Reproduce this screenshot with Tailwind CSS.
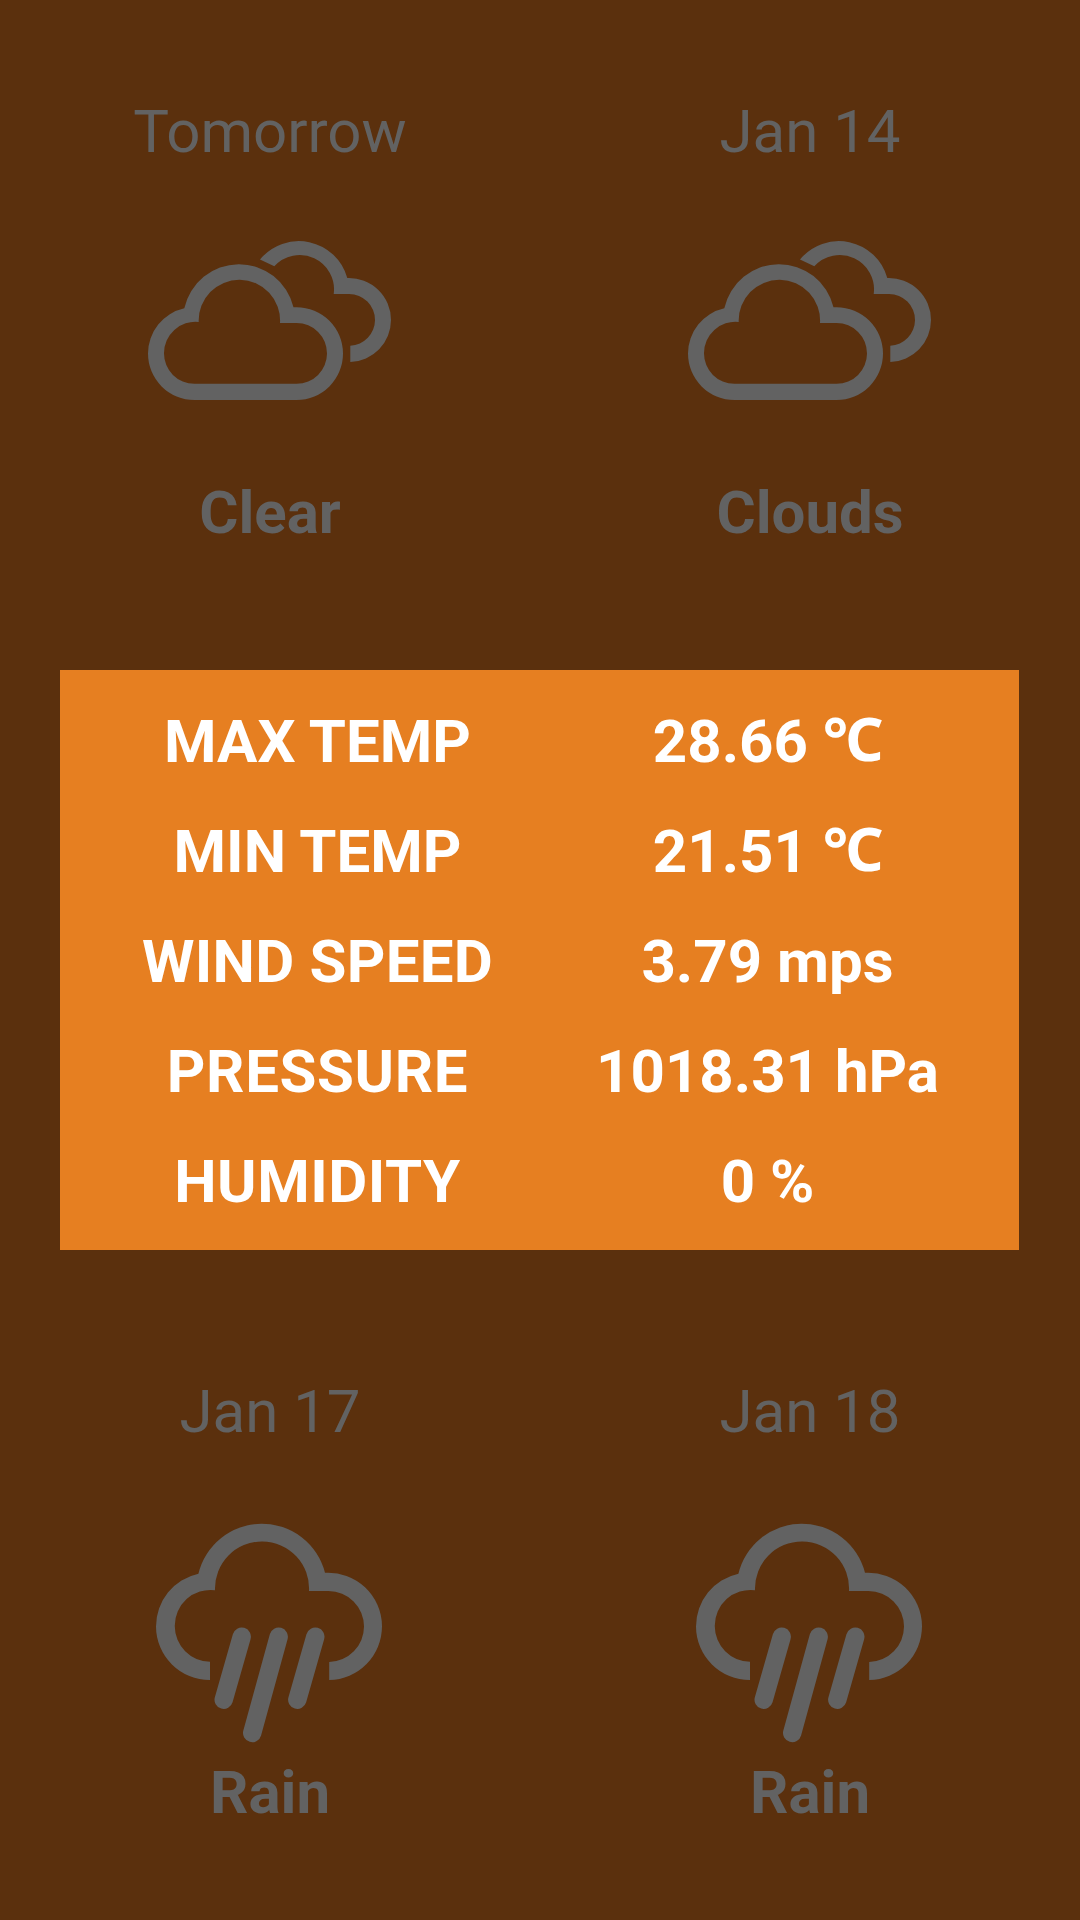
<!DOCTYPE html>
<html lang="en">
<head>
  <meta charset="UTF-8" />
  <meta name="viewport" content="width=device-width, initial-scale=1" />
  <title>Forecast</title>
  <script src="https://cdn.jsdelivr.net/npm/@tailwindcss/browser@4"></script>
</head>
<body class="w-[1080px] h-[1920px] overflow-hidden bg-[#5b300d] text-[#626262] text-[60px] leading-[70px] font-[Roboto,sans-serif]">

  <!-- icons shared by the forecast cells -->
  <svg class="hidden">
    <symbol id="cloudy" viewBox="120 167 300 311">
      <path fill="currentColor" fill-rule="evenodd" d="M184.3 308.3A56 56 0 0 1 293.5 307.2H296.6A46.4 46.4 0 0 1 296.6 400H194.4A46.4 46.4 0 0 1 148 353.6A46.4 46.4 0 0 1 184.3 308.3ZM198.7 322A40.7 40.7 0 1 1 280 323H296.6A30.4 30.4 0 0 1 296.6 383.8H194.4A30.4 30.4 0 0 1 164 353.4A31.4 31.4 0 0 1 198.7 322Z" />
      <path fill="currentColor" d="M260 259.5A50.2 50.2 0 0 1 347.3 278A42 42 0 0 1 391 320A42 42 0 0 1 350.3 362V345.8A25.9 25.9 0 0 0 375 320A25.9 25.9 0 0 0 349 294H333.7A34.3 34.3 0 0 0 274.3 266.3Z" />
    </symbol>
    <symbol id="rain" viewBox="120 167 300 311">
      <path fill="currentColor" d="M210 400A53.8 53.8 0 0 1 156 346.4A53.8 53.8 0 0 1 198.4 293.8A65.2 65.2 0 0 1 325 292.8A53.8 53.8 0 0 1 382 346.3A53.8 53.8 0 0 1 329.2 400V382A35.5 35.5 0 0 0 364 346.5A35.5 35.5 0 0 0 328.5 311H309A47.05 47.05 0 1 0 215 310.3A35.6 35.6 0 0 0 174.8 346.4A35.6 35.6 0 0 0 210 381.8Z" />
      <path fill="none" stroke="currentColor" stroke-width="18.4" stroke-linecap="round" d="M241.7 356.7L223.7 419.7M278.7 356.7L252.2 453M315.3 356.7L297.3 419.7" />
    </symbol>
  </svg>

  <main class="grid grid-cols-2 auto-rows-[640px]">
    <section class="flex flex-col items-center pt-[97px]">
      <h2>Tomorrow</h2>
      <svg class="w-[300px] h-[311px]"><use href="#cloudy" /></svg>
      <p class="font-bold">Clear</p>
    </section>
    <section class="flex flex-col items-center pt-[97px]">
      <h2>Jan 14</h2>
      <svg class="w-[300px] h-[311px]"><use href="#cloudy" /></svg>
      <p class="font-bold">Clouds</p>
    </section>

    <!-- day details -->
    <div class="col-span-2 flex items-center pl-[60px]">
      <dl class="grid grid-cols-[450px_450px] auto-rows-[110px] content-center w-[959px] h-[580px] pt-1 pl-[32.5px] bg-[#e67f21] text-white text-center font-bold leading-[110px]">
        <dt>MAX TEMP</dt>
        <dd>28.66 <span class="font-['Noto_Sans'] font-bold leading-none tracking-[-1px] align-[1px]">℃</span></dd>
        <dt>MIN TEMP</dt>
        <dd>21.51 <span class="font-['Noto_Sans'] font-bold leading-none tracking-[-1px] align-[1px]">℃</span></dd>
        <dt class="tracking-[0.25px]">WIND SPEED</dt>
        <dd>3.79 mps</dd>
        <dt class="tracking-[0.6px]">PRESSURE</dt>
        <dd>1018.31 hPa</dd>
        <dt class="tracking-[0.5px]">HUMIDITY</dt>
        <dd>0 %</dd>
      </dl>
    </div>

    <section class="flex flex-col items-center pt-[97px]">
      <h2>Jan 17</h2>
      <svg class="w-[300px] h-[311px]"><use href="#rain" /></svg>
      <p class="font-bold">Rain</p>
    </section>
    <section class="flex flex-col items-center pt-[97px]">
      <h2>Jan 18</h2>
      <svg class="w-[300px] h-[311px]"><use href="#rain" /></svg>
      <p class="font-bold">Rain</p>
    </section>
  </main>

</body>
</html>
